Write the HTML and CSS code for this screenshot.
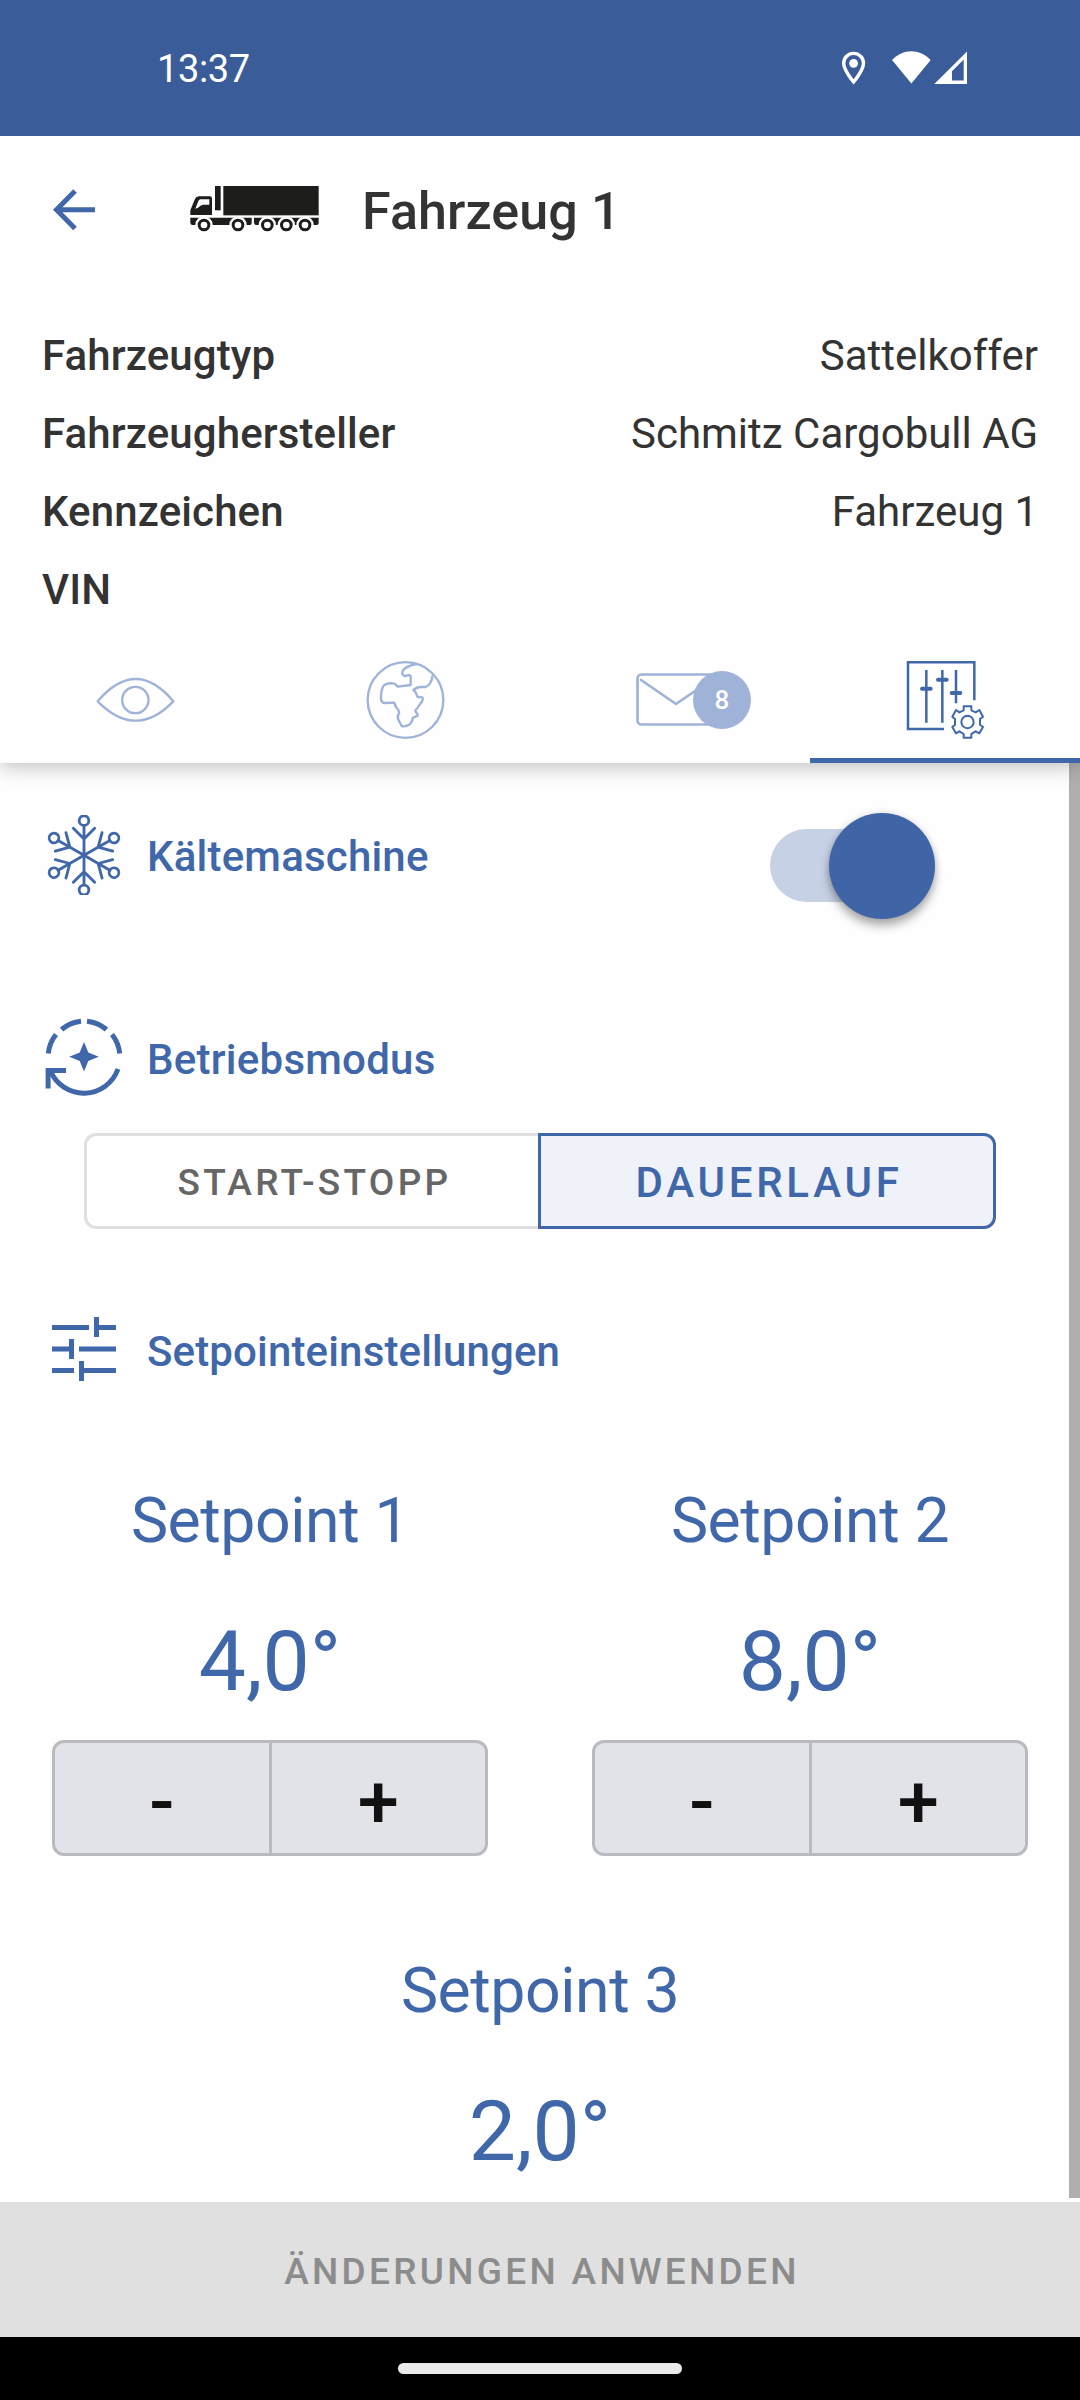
FILE: index.html
```html
<!DOCTYPE html>
<html lang="de">
<head>
<meta charset="utf-8">
<title>Fahrzeug 1</title>
<link rel="stylesheet" href="styles.css">
</head>
<body>
<div class="screen">
  <div class="statusbar">
    <span class="clock">13:37</span>
    <svg class="status-icons" viewBox="840 50 130 36" width="130" height="36">
      <path d="M853.6 53.4c-5.500 0-9.900 4.400-9.900 9.900 0 7 9.900 18.600 9.900 18.600s9.900-11.600 9.900-18.600c0-5.500-4.400-9.900-9.900-9.900z" fill="none" stroke="#fff" stroke-width="3.400"/>
      <circle cx="853.600" cy="63.300" r="4.400" fill="#fff"/>
      <path d="M892 60C903 48.200 919.700 48.200 930.700 60L911.400 83.500z" fill="#fff"/>
      <path d="M967 51.500V84H934.300zM963.700 59.500L952 71.200V80.500H963.700z" fill="#fff" fill-rule="evenodd"/>
    </svg>
  </div>

  <header class="appbar">
    <svg class="back" viewBox="53 189 42 42" width="42" height="42">
      <path d="M95 209.700H57M75 191L56.500 209.700L75 228.500" fill="none" stroke="#4067a9" stroke-width="5"/>
    </svg>
    <svg class="truck" viewBox="30 48 387 138" width="129" height="46">
      <g fill="#1d1d1b">
        <rect x="130" y="48" width="286" height="88"/>
        <rect x="105" y="48" width="17" height="73"/>
        <path fill-rule="evenodd" d="M31 135V121L44 89Q49 79 58 79H90Q96 79 96 86V135zM46 116L55 93Q57 88 62 88H88V104H70Q62 105 57 111Q54 115 46 116z"/>
        <path d="M31 143H215V158Q215 165 207 165H38Q31 165 31 157z"/>
        <path d="M222 143H416V158Q416 165 408 165H229Q222 165 222 157z"/>
      </g>
      <g fill="#1d1d1b" stroke="#fff" stroke-width="7">
        <circle cx="72" cy="165" r="22.500"/><circle cx="174" cy="165" r="22.500"/><circle cx="262" cy="165" r="22.500"/><circle cx="319" cy="165" r="22.500"/><circle cx="375" cy="165" r="22.500"/>
      </g>
      <g fill="#fff">
        <circle cx="72" cy="165" r="10"/><circle cx="174" cy="165" r="10"/><circle cx="262" cy="165" r="10"/><circle cx="319" cy="165" r="10"/><circle cx="375" cy="165" r="10"/>
      </g>
    </svg>
    <h1 class="title">Fahrzeug 1</h1>
  </header>

  <dl class="info">
    <div class="info-row"><dt>Fahrzeugtyp</dt><dd>Sattelkoffer</dd></div>
    <div class="info-row"><dt>Fahrzeughersteller</dt><dd>Schmitz Cargobull AG</dd></div>
    <div class="info-row"><dt>Kennzeichen</dt><dd>Fahrzeug 1</dd></div>
    <div class="info-row"><dt>VIN</dt><dd></dd></div>
  </dl>

  <nav class="tabs">
    <div class="tab">
      <svg viewBox="45 48 360 264" width="120" height="88" fill="none" stroke="#9fb3d8" stroke-width="7" stroke-linejoin="round">
        <path d="M113 184Q170 117 227 117T340 184Q284 242 227 242T113 184z"/>
        <circle cx="226" cy="180" r="39.500"/>
      </svg>
    </div>
    <div class="tab">
      <svg viewBox="855 48 360 264" width="120" height="88" fill="none" stroke="#9fb3d8" stroke-width="7" stroke-linejoin="round" stroke-linecap="round">
        <circle cx="1036.500" cy="180" r="113.500"/>
        <path d="M1070 72C1050 76 1036 82 1029 91C1023 101 1030 109 1037 108C1044 104 1052 104 1052 110V135L1014 140C1007 136 1008 130 999 130C985 129 974 132 969 140C964 150 963 161 963 174C963 184 967 189 974 189L1001 188C1007 191 1005 199 1010 204C1017 211 1019 217 1016 222C1012 228 1013 236 1016 241L1025 258C1036 261 1049 256 1054 247C1058 241 1056 235 1060 233L1073 227C1075 220 1064 216 1066 210C1074 206 1076 197 1081 191C1088 184 1090 178 1087 172L1073 171C1068 163 1071 157 1060 150C1066 145 1073 141 1081 141H1097C1107 137 1117 124 1117 109"/>
      </svg>
    </div>
    <div class="tab">
      <svg viewBox="615 656 120 88" width="120" height="88" fill="none" stroke="#9fb3d8" stroke-width="2.700" stroke-linejoin="round" stroke-linecap="round">
        <rect x="637.500" y="674.500" width="78" height="50" rx="4"/>
        <path d="M641 680L676 704L711 680"/>
      </svg>
      <span class="badge">8</span>
    </div>
    <div class="tab tab-active">
      <svg viewBox="-15 18 360 264" width="120" height="88" fill="none" stroke="#4067a9" stroke-width="7.500">
        <path d="M162 237H54V37H253V151"/>
        <path d="M109 60V218M157 60V218M198 60V160"/>
        <path d="M96 116H122M144 89H170M185 129H211" stroke-width="12" stroke-linecap="round"/>
        <circle cx="232.500" cy="216" r="18.500" stroke-width="6"/>
        <path stroke-width="6" stroke-linejoin="round" d="M221 169H244V181L257 187L268 180L279 200L270 207V224L279 231L268 250L257 244L244 252V263H221V252L208 244L198 250L187 231L195 224V207L187 200L198 180L208 187L221 181z"/>
      </svg>
    </div>
  </nav>

  <main class="content">
    <section class="section-head section-cooling">
      <svg viewBox="-48 525 240 240" width="80" height="80" fill="none" stroke="#4067a9" stroke-width="8.500" stroke-linecap="round">
        <path id="arm" d="M72 646V558M72 597L40 565M72 597L104 565"/>
        <circle id="tip" cx="72" cy="542" r="14.500"/>
        <use href="#arm" transform="rotate(60 72 646)"/><use href="#tip" transform="rotate(60 72 646)"/>
        <use href="#arm" transform="rotate(120 72 646)"/><use href="#tip" transform="rotate(120 72 646)"/>
        <use href="#arm" transform="rotate(180 72 646)"/><use href="#tip" transform="rotate(180 72 646)"/>
        <use href="#arm" transform="rotate(240 72 646)"/><use href="#tip" transform="rotate(240 72 646)"/>
        <use href="#arm" transform="rotate(300 72 646)"/><use href="#tip" transform="rotate(300 72 646)"/>
      </svg>
      <h2>Kältemaschine</h2>
      <div class="switch"><div class="switch-thumb"></div></div>
    </section>

    <section class="section-head section-mode">
      <svg viewBox="44 1017 80 80" width="80" height="80" fill="none" stroke="#4067a9" stroke-width="5">
        <path d="M81 1021.200A36 36 0 0 0 61.500 1029.500M56 1034.500A36 36 0 0 0 48.300 1053.500M87 1021.200A36 36 0 0 1 106.500 1029.500M112 1034.500A36 36 0 0 1 119.700 1053.500"/>
        <path d="M118 1069A36.200 36.200 0 0 1 50.500 1071"/>
        <path d="M66 1070.400H48.100V1088.500"/>
        <path fill="#4067a9" stroke="none" d="M84 1042L88.300 1052.400L98.800 1056.700L88.300 1061L84 1071.400L79.700 1061L69.200 1056.700L79.700 1052.400z"/>
      </svg>
      <h2>Betriebsmodus</h2>
    </section>

    <div class="segmented">
      <div class="segment">START-STOPP</div>
      <div class="segment segment-on">DAUERLAUF</div>
    </div>

    <section class="section-head section-setpoints">
      <svg viewBox="44 1309 80 80" width="80" height="80" fill="#4067a9">
        <path d="M52 1325h37v5h-37zM94 1317h5v8h17v5h-17v7h-5zM52 1346.500h17v-7.500h5v20h-5v-7.500h-17zM79 1346.500h37v5h-37zM52 1368h22v5h-22zM79 1361h5v7h32v5h-32v8h-5z"/>
      </svg>
      <h2>Setpointeinstellungen</h2>
    </section>

    <div class="setpoints">
      <div class="setpoint">
        <div class="sp-name">Setpoint 1</div>
        <div class="sp-value">4,0°</div>
        <div class="stepper"><div class="step">-</div><div class="step">+</div></div>
      </div>
      <div class="setpoint">
        <div class="sp-name">Setpoint 2</div>
        <div class="sp-value">8,0°</div>
        <div class="stepper"><div class="step">-</div><div class="step">+</div></div>
      </div>
      <div class="setpoint setpoint-wide">
        <div class="sp-name">Setpoint 3</div>
        <div class="sp-value">2,0°</div>
      </div>
    </div>
    <div class="scrollbar"></div>
  </main>

  <footer class="apply">ÄNDERUNGEN ANWENDEN</footer>
  <div class="navbar"><div class="pill"></div></div>
</div>
</body>
</html>
```
FILE: styles.css
```css
* { box-sizing: border-box; }

body {
  margin: 0;
  font-family: Roboto, "Liberation Sans", sans-serif;
  font-size: 42px;
  color: #333;
  background: #fff;
}

h1, h2, dl, dt, dd { margin: 0; font-size: inherit; font-weight: 500; }
svg { display: block; flex: none; }

.screen {
  display: flex;
  flex-direction: column;
  width: 1080px;
  height: 2400px;
  overflow: hidden;
  background: #fefefe;
}

/* system status bar */
.statusbar {
  display: flex;
  flex: none;
  justify-content: space-between;
  height: 136px;
  padding: 0 110px 0 157px;
  background: #3a5c98;
  color: #fff;
}
.clock { padding-top: 47px; font-size: 38px; line-height: 44px; letter-spacing: -.4px; }
.status-icons { margin-top: 50px; }

/* title row */
.appbar {
  display: flex;
  flex: none;
  align-items: center;
  height: 151px;
  padding-left: 53px;
}
.back { margin-top: -3px; }
.truck { margin: -6px 0 0 95px; }
.title { margin-left: 43px; font-size: 52px; line-height: 60px; letter-spacing: .1px; }

/* vehicle data */
.info { flex: none; padding: 30px 42px 0; }
.info-row {
  display: flex;
  justify-content: space-between;
  height: 78px;
  line-height: 78px;
}
.info-row dt { letter-spacing: .12px; }
.info-row dd { font-weight: 400; }

.tabs {
  position: relative;
  z-index: 1;
  display: grid;
  flex: none;
  grid-template-columns: repeat(4, 1fr);
  height: 134px;
  background: #fefefe;
  box-shadow: 0 3px 20px rgba(0, 0, 0, .27);
  clip-path: inset(0 0 -40px 0);
}
.tab {
  position: relative;
  display: flex;
  justify-content: center;
  padding-top: 27px;
}
.tab-active { border-bottom: 5px solid #4067a9; }
.badge {
  position: absolute;
  top: 42px;
  left: 153px;
  width: 58px;
  height: 58px;
  border-radius: 50%;
  background: #9fb3d8;
  color: #fff;
  font-size: 26px;
  font-weight: 500;
  line-height: 59px;
  text-align: center;
}

/* scrolling settings */
.content {
  position: relative;
  flex: none;
  height: 1439px;
  padding-top: 52px;
  overflow: hidden;
  color: #4067a9;
}
.section-head {
  display: flex;
  align-items: center;
  gap: 23px;
  height: 80px;
  padding: 0 144px 0 44px;
}
.section-head h2 { padding-top: 6px; line-height: 50px; letter-spacing: .15px; }
.section-cooling h2 { padding-top: 4px; letter-spacing: .2px; }
.section-mode { margin-top: 122px; }
.section-mode h2 { letter-spacing: .25px; }
.section-setpoints { margin-top: 80px; }

.switch {
  display: flex;
  align-items: center;
  justify-content: flex-end;
  width: 129px;
  height: 73px;
  margin: 21px 37px 0 auto;
  border-radius: 37px;
  background: #c6d1e5;
}
.switch-thumb {
  flex: none;
  width: 106px;
  height: 106px;
  margin-right: -36px;
  border-radius: 50%;
  background: #4065a6;
  box-shadow: 0 7px 10px rgba(0, 0, 0, .3), 0 0 7px rgba(0, 0, 0, .12);
}

.segmented {
  display: flex;
  height: 96px;
  margin: 36px 84px 0;
}
.segment {
  width: 454px;
  padding-left: 4px;
  border: 3px solid #e0e0e0;
  border-right: 0;
  border-radius: 12px 0 0 12px;
  color: #666;
  font-size: 37px;
  font-weight: 500;
  letter-spacing: 3.3px;
  line-height: 93px;
  text-align: center;
}
.segment-on {
  width: 458px;
  border: 3px solid #4067a9;
  border-radius: 0 12px 12px 0;
  background: #eff2f8;
  color: #4067a9;
  font-size: 42px;
  letter-spacing: 3.75px;
}

.setpoints {
  display: grid;
  grid-template-columns: 1fr 1fr;
  row-gap: 95px;
  padding-top: 92px;
}
.setpoint {
  display: flex;
  flex-direction: column;
  align-items: center;
}
.setpoint-wide { grid-column: span 2; }
.sp-name { font-size: 62.5px; line-height: 80px; letter-spacing: -.4px; }
.sp-value { margin-top: 51px; font-size: 84px; line-height: 100px; }
.stepper {
  display: flex;
  width: 436px;
  height: 116px;
  margin-top: 28px;
  border: 3px solid #b9babf;
  border-radius: 12px;
  background: #e2e3e8;
  color: #111;
  overflow: hidden;
}
.step {
  flex: 1;
  font-size: 74px;
  font-weight: 500;
  line-height: 118px;
  text-align: center;
}
.step + .step { border-left: 3px solid #b9babf; }

.scrollbar {
  position: absolute;
  top: 0;
  right: 0;
  width: 11px;
  height: 1435px;
  background: #afafaf;
}

.apply {
  flex: none;
  height: 135px;
  padding-left: 4px;
  background: #e0e0e0;
  color: #8c8c8c;
  font-size: 37px;
  font-weight: 500;
  letter-spacing: 3.3px;
  line-height: 139px;
  text-align: center;
}
.navbar {
  display: flex;
  flex: none;
  align-items: center;
  justify-content: center;
  height: 63px;
  background: #000;
}
.pill { width: 284px; height: 11px; border-radius: 6px; background: #eaeaea; }
```
